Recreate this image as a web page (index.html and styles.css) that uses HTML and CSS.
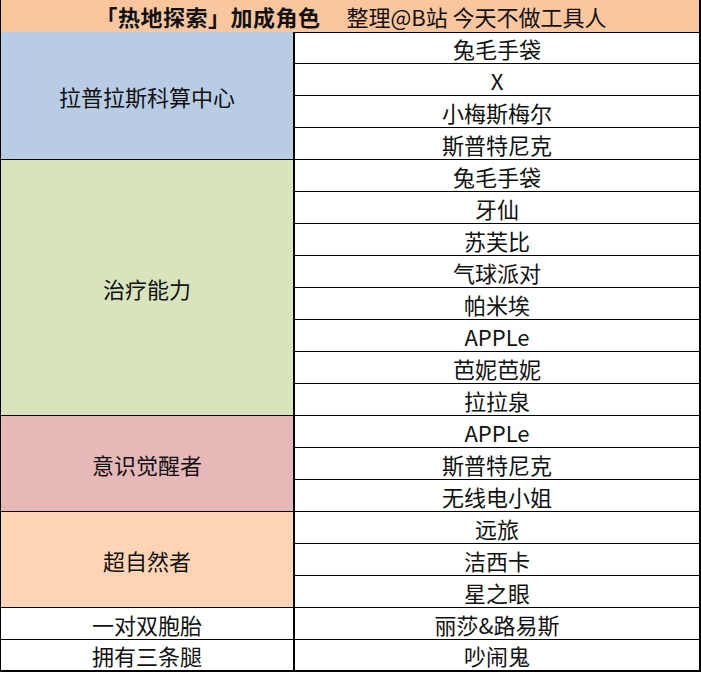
FILE: index.html
```html
<!DOCTYPE html>
<html lang="zh-CN">
<head>
<meta charset="utf-8">
<title>热地探索 加成角色</title>
<link rel="stylesheet" href="styles.css">
</head>
<body>
<div class="sheet">
  <div class="head"><span class="title">「热地探索」加成角色</span><span class="credit">整理@B站 今天不做工具人</span></div>

  <div class="cat blue span4">拉普拉斯科算中心</div>
  <div class="item">兔毛手袋</div>
  <div class="item">X</div>
  <div class="item">小梅斯梅尔</div>
  <div class="item">斯普特尼克</div>

  <div class="cat green span8">治疗能力</div>
  <div class="item">兔毛手袋</div>
  <div class="item">牙仙</div>
  <div class="item">苏芙比</div>
  <div class="item">气球派对</div>
  <div class="item">帕米埃</div>
  <div class="item">APPLe</div>
  <div class="item">芭妮芭妮</div>
  <div class="item">拉拉泉</div>

  <div class="cat red span3">意识觉醒者</div>
  <div class="item">APPLe</div>
  <div class="item">斯普特尼克</div>
  <div class="item">无线电小姐</div>

  <div class="cat orange span3">超自然者</div>
  <div class="item">远旅</div>
  <div class="item">洁西卡</div>
  <div class="item">星之眼</div>

  <div class="cat">一对双胞胎</div>
  <div class="item">丽莎&amp;路易斯</div>

  <div class="cat last">拥有三条腿</div>
  <div class="item last">吵闹鬼</div>
</div>
</body>
</html>
```
FILE: styles.css
```css
* { box-sizing: border-box; }
html, body { margin: 0; padding: 0; background: #ffffff; }
body {
  font-family: "Noto Sans CJK SC", "Noto Sans", "Liberation Sans", sans-serif;
  color: #111111;
}
.sheet {
  width: 701px;
  display: grid;
  grid-template-columns: 294px 1fr;
  grid-auto-rows: 32px;
  border-left: 1px solid #000;
  border-right: 2px solid #000;
}
.head {
  grid-column: 1 / span 2;
  height: 33px;
  background: #f9c69e;
  border-bottom: 1px solid #000;
  display: flex;
  align-items: center;
  justify-content: center;
  font-size: 22px;
  line-height: 1;
  padding-left: 2px;
}
.title { font-weight: 700; letter-spacing: 0.5px; }
.credit { margin-left: 26px; }
.cat, .item {
  display: flex;
  align-items: center;
  justify-content: center;
  font-size: 22px;
  line-height: 1;
  border-bottom: 1px solid #000;
  white-space: nowrap;
}
.cat { border-right: 2px solid #000; }
.span4 { grid-row: span 4; }
.span8 { grid-row: span 8; }
.span3 { grid-row: span 3; }
.blue { background: #b8cce4; }
.green { background: #d8e4bc; }
.red { background: #e6b8b7; }
.orange { background: #fcd5b4; }
.last { border-bottom-width: 2px; }
```
